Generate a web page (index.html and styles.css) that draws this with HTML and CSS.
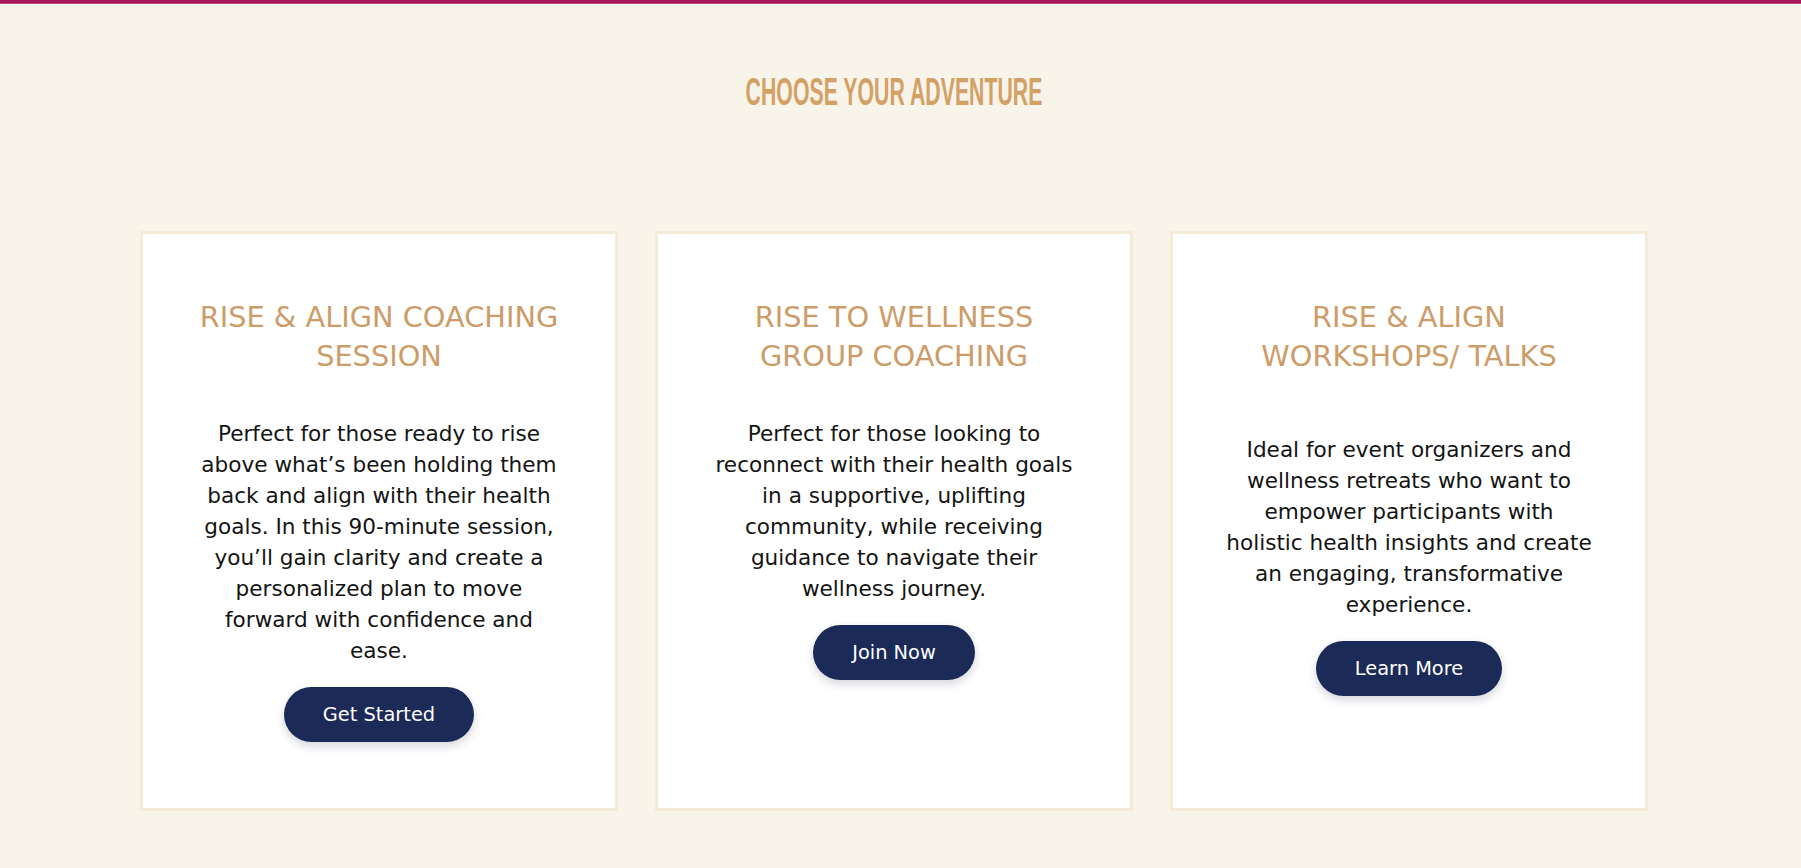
FILE: index.html
```html
<!DOCTYPE html>
<html lang="en">
<head>
<meta charset="utf-8">
<title>Choose Your Adventure</title>
<link rel="stylesheet" href="styles.css">
</head>
<body>
<div class="topbar"></div>
<section class="adventure">
  <h2 class="heading"><span class="heading-text">CHOOSE YOUR ADVENTURE</span></h2>
  <div class="cards">
    <div class="card">
      <h3 class="card-title">RISE &amp; ALIGN COACHING<br>SESSION</h3>
      <p class="card-text">Perfect for those ready to rise<br>above what’s been holding them<br>back and align with their health<br>goals. In this 90-minute session,<br>you’ll gain clarity and create a<br>personalized plan to move<br>forward with confidence and<br>ease.</p>
      <a class="btn" href="#">Get Started</a>
    </div>
    <div class="card">
      <h3 class="card-title">RISE TO WELLNESS<br>GROUP COACHING</h3>
      <p class="card-text">Perfect for those looking to<br>reconnect with their health goals<br>in a supportive, uplifting<br>community, while receiving<br>guidance to navigate their<br>wellness journey.</p>
      <a class="btn" href="#">Join Now</a>
    </div>
    <div class="card">
      <h3 class="card-title">RISE &amp; ALIGN<br>WORKSHOPS/ TALKS</h3>
      <p class="card-text card-text-low">Ideal for event organizers and<br>wellness retreats who want to<br>empower participants with<br>holistic health insights and create<br>an engaging, transformative<br>experience.</p>
      <a class="btn" href="#">Learn More</a>
    </div>
  </div>
</section>
</body>
</html>
```
FILE: styles.css
```css
html, body {
  margin: 0;
  padding: 0;
}
body {
  background: #f8f4ea;
  font-family: "DejaVu Sans", "Noto Sans", sans-serif;
  color: #111;
  height: 868px;
  overflow: hidden;
}
.topbar {
  height: 3px;
  background: #a8195c;
  border-bottom: 1px solid #c0487c;
}
.adventure {
  padding: 0 153px 0 140px;
}
.heading {
  margin: 69px 0 0;
  text-align: center;
  font-family: "Liberation Sans Narrow", "Liberation Sans", sans-serif;
  font-weight: 700;
  font-size: 38px;
  line-height: 38px;
  color: #d3a066;
}
.heading-text {
  display: inline-block;
  transform: scaleX(0.56);
}
.cards {
  margin-top: 120px;
  display: grid;
  grid-template-columns: repeat(3, 1fr);
  gap: 37px;
}
.card {
  box-sizing: border-box;
  background: #fff;
  border: 3px solid #f3ead8;
  height: 580px;
  padding: 64px 20px 0;
  display: flex;
  flex-direction: column;
  align-items: center;
  text-align: center;
}
.card-title {
  margin: 0;
  font-weight: 400;
  font-size: 28.8px;
  line-height: 39px;
  color: #cc9c69;
}
.card-text {
  margin: 42px 0 0;
  font-size: 21.6px;
  line-height: 31px;
  color: #141414;
}
.card-text-low {
  margin-top: 58px;
}
.btn {
  margin-top: 21px;
  display: inline-flex;
  align-items: center;
  justify-content: center;
  height: 55px;
  padding: 0 39px;
  border-radius: 28px;
  background: #1b2a56;
  color: #fff;
  font-size: 19.4px;
  text-decoration: none;
  box-shadow: 0 4px 10px rgba(20, 30, 60, 0.18);
}
```
